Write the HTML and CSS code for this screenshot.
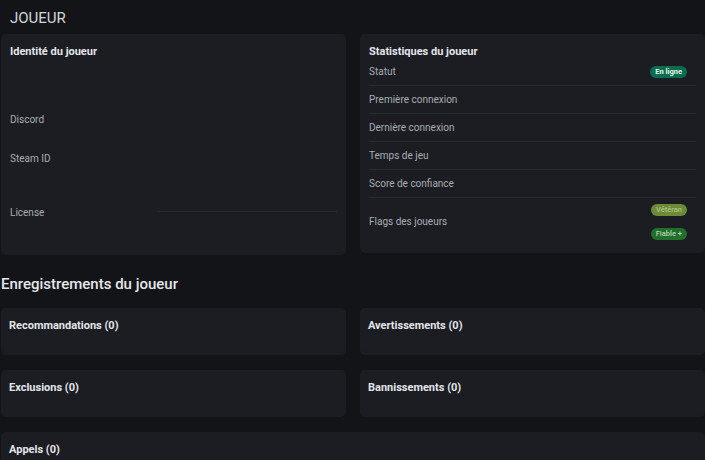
FILE: index.html
```html
<!DOCTYPE html>
<html lang="fr">
<head>
<meta charset="utf-8">
<link rel="stylesheet" href="styles.css">
</head>
<body>
<div class="page">
  <header class="topbar">JOUEUR</header>
  <div class="cols">
    <section class="card ident">
      <h3 class="card-title">Identité du joueur</h3>
      <div class="ident-spacer"></div>
      <div class="ident-row r-discord"><span class="label">Discord</span><span class="value"></span></div>
      <div class="ident-row r-steam"><span class="label">Steam ID</span><span class="value"></span></div>
      <div class="ident-row r-license"><span class="label">License</span><span class="value v-line"></span></div>
    </section>
    <section class="card stats">
      <h3 class="card-title">Statistiques du joueur</h3>
      <div class="stat-row"><span class="label">Statut</span><span class="badge b-online">En ligne</span></div>
      <div class="stat-row"><span class="label">Première connexion</span></div>
      <div class="stat-row"><span class="label">Dernière connexion</span></div>
      <div class="stat-row"><span class="label">Temps de jeu</span></div>
      <div class="stat-row"><span class="label">Score de confiance</span></div>
      <div class="stat-row flags"><span class="label">Flags des joueurs</span>
        <span class="badges"><span class="badge b-veteran">Vétéran</span><span class="badge b-fiable">Fiable +</span></span>
      </div>
    </section>
  </div>
  <h2 class="section-title">Enregistrements du joueur</h2>
  <div class="records">
    <section class="card rec"><h3 class="card-title">Recommandations (0)</h3></section>
    <section class="card rec"><h3 class="card-title">Avertissements (0)</h3></section>
    <section class="card rec"><h3 class="card-title">Exclusions (0)</h3></section>
    <section class="card rec"><h3 class="card-title">Bannissements (0)</h3></section>
    <section class="card rec wide"><h3 class="card-title">Appels (0)</h3></section>
  </div>
</div>
</body>
</html>
```
FILE: styles.css
```css
* { box-sizing: border-box; }
html, body { margin: 0; padding: 0; }
body {
  background: #131418;
  font-family: Roboto, Inter, "Noto Sans", sans-serif;
  color: #a9adb4;
  overflow: hidden;
}
.page { width: 705px; padding-left: 1px; }
.topbar {
  height: 34px;
  padding-left: 9px;
  padding-top: 1px;
  display: flex;
  align-items: center;
  font-size: 15px;
  color: #d4d6da;
  font-weight: 400;
}
.cols {
  display: grid;
  grid-template-columns: 345px 345px;
  column-gap: 14px;
  align-items: start;
}
.card {
  background: #1b1d23;
  border-radius: 5px;
}
.card-title {
  margin: 0;
  font-size: 11px;
  line-height: 14px;
  font-weight: 700;
  color: #e4e6ea;
}
.ident { height: 221px; padding: 11px 9px 8px 9px; display: flex; flex-direction: column; }
.ident-spacer { height: 41px; }
.label { font-size: 10px; line-height: 14px; color: #a9adb4; }
.ident-row { display: grid; grid-template-columns: 147px 1fr; align-items: center; }
.r-discord { height: 39px; }
.r-steam { height: 39px; }
.r-license { height: 69px; }
.value { display: block; }
.v-line { height: 34px; align-self: start; border-bottom: 1px solid #262a31; }
.stats { height: 219px; padding: 11px 9px 6px 9px; }
.stat-row {
  height: 28px;
  display: flex;
  align-items: center;
  justify-content: space-between;
  border-bottom: 1px solid #262a31;
  padding-right: 9px;
}
.stat-row:first-of-type { height: 27px; }
.stat-row.flags { height: 48px; border-bottom: none; }
.badges { display: flex; flex-direction: column; align-items: flex-end; gap: 12px; }
.badge {
  display: inline-block;
  font-size: 7.5px;
  line-height: 12px;
  height: 12px;
  padding: 0 5px;
  border-radius: 6px;
  font-weight: 700;
}
.b-online { background: #0b6d4f; color: #e9f6f0; }
.b-veteran { background: #6b8b37; color: #a9c383; font-weight: 500; }
.b-fiable { background: #226e2b; color: #b7d1b8; font-weight: 500; }
.section-title {
  margin: 0;
  height: 53px;
  padding-top: 4px;
  display: flex;
  align-items: center;
  font-size: 15px;
  font-weight: 500;
  color: #e6e8eb;
}
.records {
  display: grid;
  grid-template-columns: 345px 345px;
  column-gap: 14px;
  row-gap: 15px;
}
.rec { height: 47px; padding: 11px 8px; }
.rec.wide { grid-column: 1 / 3; height: 60px; }
```
